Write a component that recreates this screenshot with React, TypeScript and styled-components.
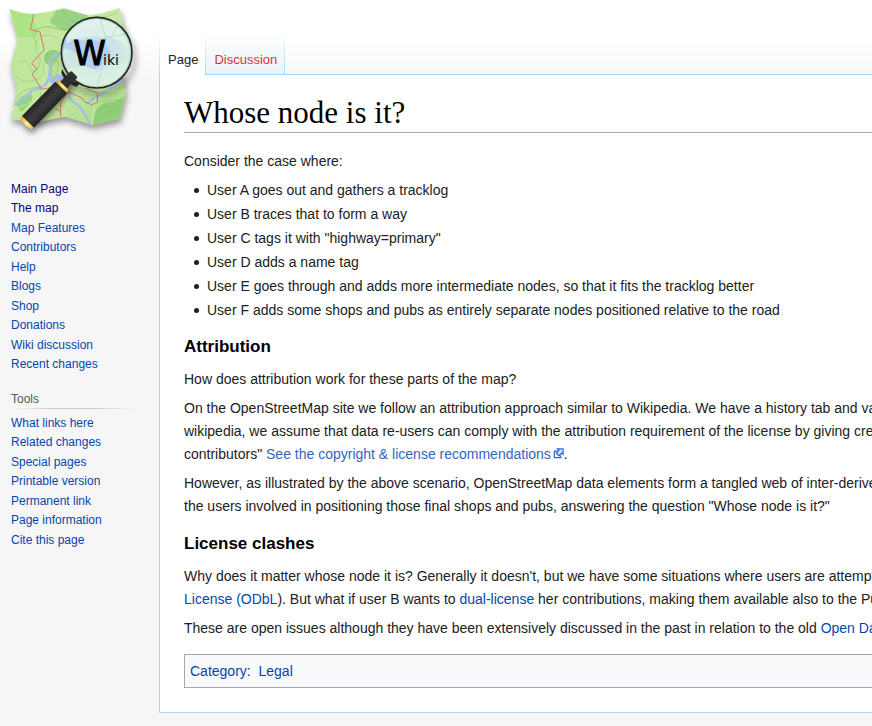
import React from "react";
import styled, { createGlobalStyle } from "styled-components";

const GlobalStyle = createGlobalStyle`
  * { box-sizing: border-box; }
  body { margin: 0; background: #f6f6f6; color: #202122; font-family: "Liberation Sans", Arial, sans-serif; font-size: 14px; overflow-x: hidden; }
  ul { margin: 0; padding: 0; }
`;

const Page = styled.div`
  display: grid;
  grid-template-columns: 159px minmax(0, 1fr);
  align-items: start;
  background: linear-gradient(#ffffff 0, #ffffff 40px, #f6f6f6 80px) top / 100% 80px no-repeat;
  padding-bottom: 13px;
`;

const Sidebar = styled.aside`
  display: flex;
  flex-direction: column;
`;

const LogoLink = styled.a`
  display: block;
  height: 180px;
`;

const LogoArt = styled.svg`
  display: block;
  width: 150px;
  height: 145px;
`;

const Nav = styled.nav`
  padding-left: 11px;
  font-size: 12px;
  line-height: 19px;
  & + & { margin-top: 15px; }
`;

const NavTitle = styled.h3`
  margin: 0 22px 5px 0;
  color: #54595d;
  font-size: 12px;
  font-weight: 400;
  line-height: 19px;
  background: linear-gradient(to right, rgba(200, 204, 209, 0), #c8ccd1 33%, #c8ccd1 66%, rgba(200, 204, 209, 0)) bottom / 100% 1px no-repeat;
`;

const NavList = styled.ul`
  list-style: none;
`;

const NavItem = styled.li`
  &:nth-child(even) { margin-bottom: 1px; }
`;

const Link = styled.a<{ $kind?: "visited" | "external" }>`
  color: ${(p) => (p.$kind === "visited" ? "#0b0080" : p.$kind === "external" ? "#3366bb" : "#0645ad")};
  text-decoration: none;
`;

const ExternalMark = styled.svg`
  width: 11px;
  height: 11px;
  margin-left: 2px;
`;

const Main = styled.main`
  min-width: 0;
`;

const Tabs = styled.nav`
  display: flex;
  align-items: stretch;
  height: 75px;
  padding-top: 34px;
  background: linear-gradient(#a7d7f9, #a7d7f9) bottom / 100% 1px no-repeat;
`;

const Tab = styled.a<{ $active?: boolean }>`
  display: block;
  padding: 17px 7px 0 8px;
  font-size: 13px;
  line-height: 17px;
  text-decoration: none;
  color: ${(p) => (p.$active ? "#202122" : "#dd3333")};
  border-style: solid;
  border-width: 0 1px 0 ${(p) => (p.$active ? "1px" : "0")};
  border-image: linear-gradient(rgba(167, 215, 249, 0), #a7d7f9) 1;
  background: ${(p) => (p.$active ? "#ffffff" : "linear-gradient(#ffffff, #e8f2f8)")};
  margin-bottom: ${(p) => (p.$active ? "0" : "1px")};
`;

const Article = styled.article`
  background: #ffffff;
  border: solid #a7d7f9;
  border-width: 0 0 1px 1px;
  padding: 19px 0 24px 24px;
  overflow: hidden;
  white-space: nowrap;
  line-height: 23px;
`;

const Title = styled.h1`
  margin: 0 0 17px;
  border-bottom: 1px solid #a2a9b1;
  color: #000000;
  font: 400 31px/38px Georgia, "Liberation Serif", serif;
`;

const Heading = styled.h3`
  margin: 14px 0 10px;
  color: #000000;
  font-size: 17px;
  font-weight: 700;
  line-height: 23px;
`;

const Paragraph = styled.p`
  margin: 0 0 6px;
`;

const Bullets = styled.ul`
  margin: -1px 0 -1px 10px;
  list-style: none;
  line-height: 24px;
`;

const Bullet = styled.li`
  display: flex;
  align-items: center;
  gap: 8px;
  &::before {
    content: "";
    width: 5px;
    height: 5px;
    border-radius: 50%;
    background: #202122;
  }
`;

const Categories = styled.div`
  margin-top: 14px;
  padding: 5px;
  border: 1px solid #a2a9b1;
  border-right: 0;
  background: #f8f9fa;
  line-height: 22px;
`;

const MAP_OUTLINE = "M28 27 Q65 43 102 42 Q150 38 190 24 Q232 38 267 47 Q315 40 359 24 L375 95 L363 180 L378 280 L359 357 L275 375 L194 350 L120 366 L34 359 L50 272 L33 195 L54 115 Z";

function Logo() {
  return (
    <LogoArt viewBox="0 0 450 435" aria-hidden="true">
      <defs>
        <clipPath id="map"><path d={MAP_OUTLINE} /></clipPath>
        <clipPath id="glass"><circle cx="290" cy="158" r="104" /></clipPath>
        <filter id="soft" x="-20%" y="-20%" width="140%" height="150%"><feGaussianBlur stdDeviation="9" /></filter>
        <linearGradient id="paper" x1="0" y1="0" x2="1" y2="1">
          <stop offset="0" stopColor="#b9e68d" />
          <stop offset=".5" stopColor="#c8e8a8" />
          <stop offset="1" stopColor="#a8db84" />
        </linearGradient>
        <radialGradient id="lens" cx=".48" cy=".48" r=".55">
          <stop offset="0" stopColor="#bfd8f0" />
          <stop offset=".45" stopColor="#c9e2ed" />
          <stop offset=".9" stopColor="#d3eddb" />
          <stop offset="1" stopColor="#b6d6c4" />
        </radialGradient>
        <linearGradient id="grip" x1="0" y1="0" x2="0" y2="1">
          <stop offset="0" stopColor="#242424" />
          <stop offset=".5" stopColor="#3c3c3c" />
          <stop offset="1" stopColor="#242424" />
        </linearGradient>
        <linearGradient id="gold" x1="0" y1="0" x2="0" y2="1">
          <stop offset="0" stopColor="#f5b52a" />
          <stop offset=".45" stopColor="#fff09a" />
          <stop offset="1" stopColor="#eba81c" />
        </linearGradient>
      </defs>
      <path d={MAP_OUTLINE} transform="translate(3 12)" fill="#000000" opacity=".4" filter="url(#soft)" />
      <path d={MAP_OUTLINE} fill="url(#paper)" />
      <g clipPath="url(#map)" fill="none">
        <path d="M28 27 L102 42 L118 115 L54 115 Z" fill="#aee483" />
        <path d="M33 195 L54 115 L118 115 L130 200 L120 366 L34 359 L50 272 Z" fill="#bde798" opacity=".7" />
        <path d="M170 30 L200 28 L267 45 L240 90 L190 92 L148 66 Z" fill="#98d384" />
        <path d="M130 168 Q158 135 180 160 L163 202 Q132 200 130 168 Z" fill="#91cf7d" />
        <path d="M48 315 Q60 277 97 285 Q102 308 63 336 Z" fill="#98d281" />
        <path d="M285 338 Q300 300 340 306 L372 290 L359 357 L278 372 Z" fill="#91ce78" />
        <path d="M40 315 Q75 295 95 272 Q140 262 145 238 Q152 208 149 185 Q160 160 184 160 M145 240 Q185 225 205 258 Q200 300 232 314 Q257 338 268 372 M150 240 Q195 275 210 270 M260 310 Q320 275 374 238" stroke="#a4bee8" strokeWidth="7" />
        <path d="M145 238 Q185 202 205 250 L190 272 Q160 262 145 238 Z" fill="#a4bee8" />
        <path d="M158 190 Q183 170 175 203 Q168 244 153 228 Q151 208 158 190 Z" fill="#b6df91" stroke="#8ebf78" strokeWidth="2" />
        <path d="M53 115 L183 112 M102 42 L135 190 L120 366 M267 45 L240 110 M34 330 L205 266 L376 274 M205 266 L194 350 M275 375 L292 265" stroke="#d5efbb" strokeWidth="3" opacity=".6" />
        <g stroke="#849f65" strokeWidth="2" opacity=".5">
          <path d="M104 98 Q130 65 183 88 Q226 94 248 50 M112 130 Q80 90 135 80 L190 90 M55 188 Q80 170 94 212 Q112 221 122 180 Q106 160 108 124 Q128 92 175 115 M46 230 Q91 262 133 222 Q126 192 144 160" />
          <path d="M44 300 Q72 260 119 262 Q130 292 104 315 M292 350 Q289 315 335 320 M268 320 Q320 290 372 304 M302 358 Q320 320 365 310 M185 28 Q200 72 258 70 M282 48 Q323 58 353 35 M318 346 Q342 320 364 335" />
        </g>
        <path d="M102 42 L91 88 L120 96 L132 150 L95 190 L111 207 L96 223 L125 268 L150 263 L168 281 M205 273 L181 310 L182 350 M166 326 L181 334 M205 276 L245 293 L254 306 L275 314 L292 306 L292 278 L255 265 M320 256 L351 246 L371 235" stroke="#d9707a" strokeWidth="3" />
      </g>
      <g transform="translate(8 18)" filter="url(#soft)" opacity=".45">
        <circle cx="290" cy="158" r="105" fill="none" stroke="#000000" strokeWidth="9" />
        <path d="M210 229 L75 373" stroke="#000000" strokeWidth="35" />
      </g>
      <circle cx="290" cy="158" r="105" fill="url(#lens)" />
      <g clipPath="url(#glass)">
        <path d="M184 145 Q218 142 245 178 Q251 205 286 208 Q323 190 331 158 Q311 110 244 122 Q213 110 192 119 Z" fill="#abc9ef" opacity=".7" />
        <path d="M199 102 Q246 32 333 67 Q380 98 383 145 Q344 103 307 112 Q254 101 199 130 Z" fill="#eefaf1" opacity=".5" />
        <path d="M197 211 Q249 185 295 218 Q339 185 385 188 Q355 265 290 265 Q230 265 197 211 Z" fill="#dff4e3" opacity=".6" />
        <path d="M300 53 L317 112 L386 102 M303 218 L290 263 M352 75 L337 106" fill="none" stroke="#b2d7b0" strokeWidth="4" opacity=".5" />
      </g>
      <circle cx="290" cy="158" r="106" fill="none" stroke="#202628" strokeWidth="5" />
      <circle cx="290" cy="158" r="102" fill="none" stroke="#8ca8a2" strokeWidth="2" opacity=".7" />
      <path d="M186 208 Q203 243 239 250 L230 260 Q196 250 184 218 Z" fill="#202020" />
      <g transform="translate(216 229) rotate(134)">
        <rect x="-10" y="-14" width="51" height="28" rx="4" fill="#303030" />
        <rect x="36" y="-22" width="14" height="44" rx="4" fill="url(#gold)" />
        <rect x="46" y="-25" width="146" height="50" rx="4" fill="url(#grip)" />
        <path d="M190 -24 H199 Q206 0 199 24 H190 Z" fill="url(#gold)" />
      </g>
      <text x="220" y="196" fontFamily="DejaVu Sans, sans-serif" fontSize="99" fill="#000000" stroke="#000000" strokeWidth="3">W</text>
      <text x="309" y="196" fontFamily="DejaVu Sans, sans-serif" fontSize="42" fill="#000000">iki</text>
    </LogoArt>
  );
}

const site = [
  ["Main Page", true],
  ["The map", true],
  ["Map Features"],
  ["Contributors"],
  ["Help"],
  ["Blogs"],
  ["Shop"],
  ["Donations"],
  ["Wiki discussion"],
  ["Recent changes"],
] as [string, boolean?][];

const tools = ["What links here", "Related changes", "Special pages", "Printable version", "Permanent link", "Page information", "Cite this page"];

const cases = [
  "User A goes out and gathers a tracklog",
  "User B traces that to form a way",
  'User C tags it with "highway=primary"',
  "User D adds a name tag",
  "User E goes through and adds more intermediate nodes, so that it fits the tracklog better",
  "User F adds some shops and pubs as entirely separate nodes positioned relative to the road",
];

export default function App() {
  return (
    <>
      <GlobalStyle />
      <Page>
        <Sidebar>
          <LogoLink href="#" aria-label="Main page"><Logo /></LogoLink>
          <Nav aria-label="Site">
            <NavList>
              {site.map(([t, v]) => (
                <NavItem key={t}><Link href="#" $kind={v ? "visited" : undefined}>{t}</Link></NavItem>
              ))}
            </NavList>
          </Nav>
          <Nav aria-label="Tools">
            <NavTitle>Tools</NavTitle>
            <NavList>
              {tools.map((t) => <NavItem key={t}><Link href="#">{t}</Link></NavItem>)}
            </NavList>
          </Nav>
        </Sidebar>
        <Main>
          <Tabs aria-label="Views">
            <Tab href="#" $active>Page</Tab>
            <Tab href="#">Discussion</Tab>
          </Tabs>
          <Article>
            <Title>Whose node is it?</Title>
            <Paragraph>Consider the case where:</Paragraph>
            <Bullets>{cases.map((c) => <Bullet key={c}>{c}</Bullet>)}</Bullets>
            <Heading>Attribution</Heading>
            <Paragraph>How does attribution work for these parts of the map?</Paragraph>
            <Paragraph>
              On the OpenStreetMap site we follow an attribution approach similar to Wikipedia. We have a history tab and various<br />
              wikipedia, we assume that data re-users can comply with the attribution requirement of the license by giving credit<br />
              contributors" <Link href="#" $kind="external">See the copyright &amp; license recommendations<ExternalMark viewBox="0 0 12 12" aria-hidden="true"><path d="M5 3.5H1.5v7h7V8" fill="#fff" stroke="#36c" strokeWidth="1.3" /><path d="M5 1h6v6L9.5 5.5 6.5 8.5 3.5 5.5 6.5 2.5z" fill="#d6e6ff" stroke="#36c" strokeWidth="1.3" /></ExternalMark></Link>.
            </Paragraph>
            <Paragraph>
              However, as illustrated by the above scenario, OpenStreetMap data elements form a tangled web of inter-derived<br />
              the users involved in positioning those final shops and pubs, answering the question "Whose node is it?"
            </Paragraph>
            <Heading>License clashes</Heading>
            <Paragraph>
              Why does it matter whose node it is? Generally it doesn't, but we have some situations where users are attempting<br />
              <Link href="#">License</Link> <Link href="#">(ODbL</Link>). But what if user B wants to <Link href="#">dual-license</Link> her contributions, making them available also to the Public
            </Paragraph>
            <Paragraph>
              These are open issues although they have been extensively discussed in the past in relation to the old <Link href="#">Open Database</Link>
            </Paragraph>
            <Categories><Link href="#">Category</Link>: &nbsp;<Link href="#">Legal</Link></Categories>
          </Article>
        </Main>
      </Page>
    </>
  );
}
